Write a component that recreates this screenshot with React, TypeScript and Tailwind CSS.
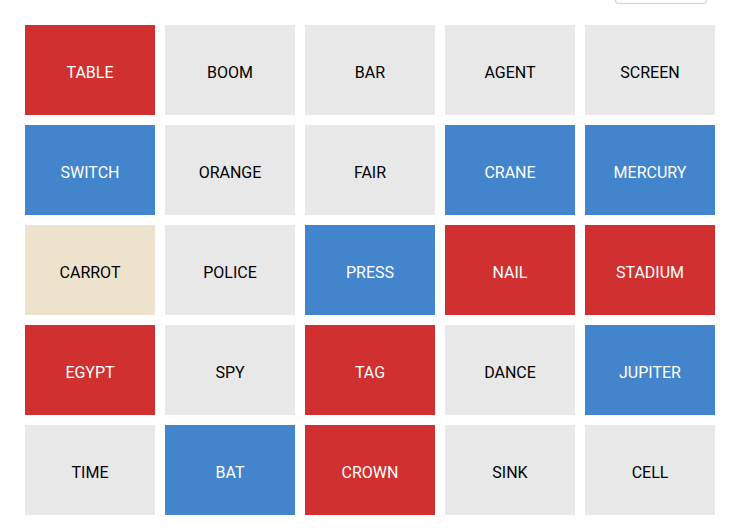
import React from "react";

type C = "r" | "b" | "g" | "n";
const cards: [string, C][] = [
  ["TABLE", "r"], ["BOOM", "g"], ["BAR", "g"], ["AGENT", "g"], ["SCREEN", "g"],
  ["SWITCH", "b"], ["ORANGE", "g"], ["FAIR", "g"], ["CRANE", "b"], ["MERCURY", "b"],
  ["CARROT", "n"], ["POLICE", "g"], ["PRESS", "b"], ["NAIL", "r"], ["STADIUM", "r"],
  ["EGYPT", "r"], ["SPY", "g"], ["TAG", "r"], ["DANCE", "g"], ["JUPITER", "b"],
  ["TIME", "g"], ["BAT", "b"], ["CROWN", "r"], ["SINK", "g"], ["CELL", "g"],
];

const cls: Record<C, string> = {
  r: "bg-[#d13030] text-white",
  b: "bg-[#4285cd] text-white",
  g: "bg-[#e8e8e8] text-black",
  n: "bg-[#ede3cd] text-black",
};

export default function App() {
  return (
    <div className="w-[729px] h-[532px] bg-white overflow-hidden" style={{ fontFamily: "Roboto, sans-serif" }}>
      <div className="flex justify-end pr-[22px] h-[25px]">
        <div className="w-[92px] h-[4px] border-x border-b border-[#cfcfcf] rounded-b-[4px] bg-white" />
      </div>
      <div className="pl-[25px] grid grid-cols-[repeat(5,130px)] gap-[10px]">
        {cards.map(([w, c]) => (
          <div key={w} className={`h-[90px] pt-[6px] flex items-center justify-center text-[16px] ${cls[c]}`}>
            {w}
          </div>
        ))}
      </div>
    </div>
  );
}
